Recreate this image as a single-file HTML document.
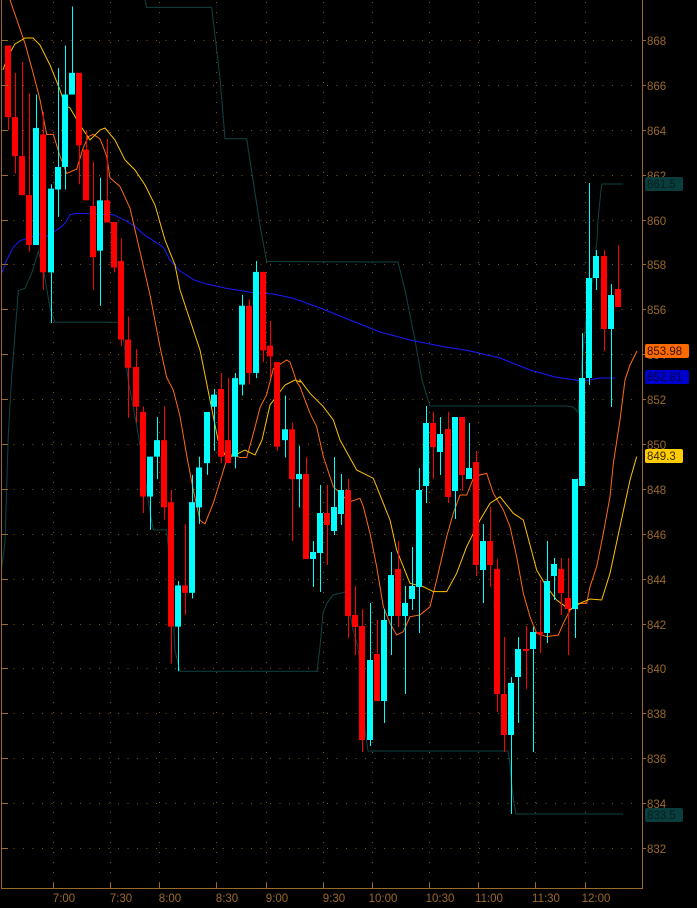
<!DOCTYPE html>
<html><head><meta charset="utf-8"><style>
html,body{margin:0;padding:0;background:#000;width:697px;height:908px;overflow:hidden}
svg{display:block}
text{font-family:"Liberation Sans",sans-serif;font-size:11.5px}
</style></head><body>
<svg id="c" width="697" height="908" xmlns="http://www.w3.org/2000/svg">
<rect width="697" height="908" fill="#000"/>
<g id="grid"></g>
<g id="lines"></g>
<g id="candles"></g>
<g id="axis"></g>
</svg>
<script>
var NS="http://www.w3.org/2000/svg";
function el(p,t,a,txt){var e=document.createElementNS(NS,t);for(var k in a)e.setAttribute(k,a[k]);if(txt!=null)e.textContent=txt;document.getElementById(p).appendChild(e);return e;}
function Y(p){return 40+(868-p)*22.444;}
var AX="#9a6a2a";
for(var p=832;p<=868;p+=2){var y=Math.round(Y(p))+0.5;
 el("grid","line",{x1:4,y1:y,x2:640,y2:y,stroke:"#7a5520","stroke-width":1,"stroke-dasharray":"1 8.5"});
 el("axis","line",{x1:642,y1:y,x2:646,y2:y,stroke:AX});
 el("axis","line",{x1:1,y1:y,x2:8,y2:y,stroke:AX});
 el("axis","text",{x:647,y:y+4.5,fill:AX},String(p));}
var vx=[53,110,159,216,266,323,372,429,478,535,585],tl=["7:00","7:30","8:00","8:30","9:00","9:30","10:00","10:30","11:00","11:30","12:00"];
vx.forEach(function(x,i){var xx=x+0.5;
 el("grid","line",{x1:xx,y1:2,x2:xx,y2:884,stroke:"#7a5520","stroke-dasharray":"1 9"});
 el("axis","line",{x1:xx,y1:883,x2:xx,y2:888,stroke:AX});
 el("axis","text",{x:x+11,y:902,fill:AX,"text-anchor":"middle"},tl[i]);});
el("axis","line",{x1:642.5,y1:0,x2:642.5,y2:888,stroke:AX});
el("axis","line",{x1:1.5,y1:0,x2:1.5,y2:888,stroke:AX});
el("axis","line",{x1:1,y1:888.5,x2:643,y2:888.5,stroke:AX});
function box(y,w,bg,fg,t){el("axis","rect",{x:645,y:y,width:w,height:14,rx:2,fill:bg});el("axis","text",{x:647,y:y+11,fill:fg},t);}
box(177,38,"#0a3d3d","#04201f","861.5");
box(344,44,"#ff6a00","#301000","853.98");
box(370,44,"#0000cc","#00004a","852.81");
box(449,38,"#ffcc00","#3a2a00","849.3");
box(808,38,"#0a3d3d","#04201f","833.5");
function pl(pts,col,w){el("lines","polyline",{points:pts.map(function(q){return q[0]+","+q[1]}).join(" "),fill:"none",stroke:col,"stroke-width":w||1});}
function z3(a){return a.map(function(q){return [q[0]/3,q[1]/2.306]});}
function z4(a){return a.map(function(q){return [300+q[0]/3,380+q[1]/3]});}
var T="#0f4444";
pl(z3([[5,1310],[15,1250],[25,1000],[35,870],[45,770],[55,670],[75,665],[95,630],[115,580],[130,620],[150,710],[165,743],[355,743],[370,780],[385,880],[410,980],[435,1100],[450,1180],[460,1222],[500,1222],[515,1350],[525,1500],[540,1548],[955,1548]]).concat([[317,671],[320,647],[323,613],[327,603],[333,595],[345,592],[347,600],[350,613],[353,630],[358,647],[362,687],[365,730],[368,751],[508,751],[510,765],[513,797],[516,814],[623,814]]),T);
pl(z3([[435,0],[440,17],[635,17],[660,180],[675,320],[740,320],[760,420],[780,520],[800,603]]).concat([[398,262],[405,290],[415,340],[422,380],[430,406],[567,406],[573,407],[578,412],[580,393],[582,360],[587,310],[593,277],[597,240],[598,220],[601,190],[602,184],[623,184]]),T);
pl(z3([[5,630],[20,600],[40,570],[60,555],[80,550],[100,545],[120,540],[140,545],[160,535],[180,525],[195,515],[210,495],[230,492],[270,493],[300,495],[340,495],[380,510],[410,525],[430,540],[460,555],[490,570],[510,600],[540,625],[580,645],[620,655],[680,665],[760,675],[820,678],[880,688],[960,710]]).concat([[350,320],[380,332],[410,340],[440,346],[470,351],[500,358],[530,370],[555,377],[582,381],[600,378],[615,378]]),"#1a1aff");
pl(z3([[30,0],[75,100],[100,170],[120,230],[140,310],[160,310],[180,360],[200,400],[230,390],[250,340],[265,315],[280,310],[300,320],[320,360],[330,410],[360,430],[390,480],[420,580],[450,680],[480,800],[500,870],[520,900],[540,960],[560,1050],[580,1130],[600,1200],[615,1208],[640,1160],[660,1110],[680,1060],[700,1050],[720,1055],[740,1055],[760,1000],[780,940],[800,910],[820,850],[860,830],[870,835],[890,880]]).concat(z4([[0,20],[30,100],[50,140],[70,230],[100,320],[130,350],[150,365],[180,355],[190,380],[210,460],[230,560],[250,680],[270,730],[290,765],[310,755],[330,710],[360,705],[390,680],[410,600],[440,470],[460,400],[480,345],[500,345],[520,295],[540,285],[560,280],[580,340],[610,390],[630,440],[650,530],[670,640],[690,710],[710,760],[740,770],[775,765],[790,730],[810,690],[830,670],[860,670],[870,620],[890,560],[910,460],[930,350],[940,250],[960,120],[975,0]])).concat([[630,365],[637,351]]),"#ff6a10");
pl([[3,70],[8,56],[15,44],[25,38],[33,38],[40,45],[50,65],[60,90],[65,105],[70,108],[80,125],[90,140],[100,130],[105,128],[115,140],[125,160],[135,170],[145,185],[155,205],[165,240],[175,265],[180,290],[190,320],[200,350],[210,400],[218,440],[225,455],[235,455],[245,450],[255,455],[262,440],[270,405],[285,385],[295,380],[300,382]].concat(z4([[0,0],[30,40],[70,80],[100,120],[120,180],[170,270],[220,295],[250,370],[270,420],[290,510],[330,610],[370,620],[400,635],[440,635],[470,580],[500,500],[540,420],[570,370],[600,350],[640,400],[670,420],[710,570],[740,620],[770,660],[810,690],[840,670],[870,657],[905,660],[930,580],[960,440],[990,300],[1010,230]])),"#ffc000");
var C=[];
var a3=[[8,105,270,105,300,0],[15,270,360,168,400,0],[22,360,450,143,450,0],[29,450,565,215,580,0],[36,295,565,218,565,1],[43,310,628,258,668,0],[51,435,628,425,745,1],[58,385,437,157,500,1],[65,218,385,105,437,1],[72,168,218,15,218,1],[79,168,335,168,425,0],[86,345,462,300,462,0],[93,475,593,373,668,0],[100,462,578,410,705,1],[107,462,513,320,513,0],[114,512,617,512,628,0],[121,602,783,550,797,0],[128,783,848,730,963,0],[136,846,938,805,975,0],[143,950,1145,937,1183,0],[150,1053,1145,1053,1222,1],[157,1015,1053,962,1105,1],[164,1015,1170,937,1198,0],[171,1158,1445,1130,1530,0],[178,1350,1445,1340,1548,1],[185,1350,1367,1208,1418,0],[192,1158,1367,1095,1380,1],[199,1078,1170,1053,1208,1],[207,950,1068,950,1095,1],[214,910,938,897,1040,1],[221,897,1053,860,1068,0],[228,1015,1068,872,1068,0],[235,872,1053,860,1080,1],[242,705,887,680,912,1],[249,705,860,690,887,0],[256,627,860,602,872,1],[263,627,808,627,835,0],[270,797,822,740,872,0],[277,835,1030,835,1040,0],[285,990,1015,912,1055,1],[292,990,1105,975,1248,0],[299,1093,1105,1028,1170,1]];
a3.forEach(function(c){C.push([c[0],c[1]/2.306,c[2]/2.306,c[3]/2.306,c[4]/2.306,c[5]]);});
var a4=[[306,474,559,457,559,0],[313,552,559,541,587,1],[320,513,553,485,592,1],[327,513,525,485,565,0],[334,507,531,457,535,1],[341,490,514,474,525,1],[348,490,616,479,638,0],[355,615,627,586,655,0],[362,626,740,609,752,0],[370,660,740,603,746,1],[377,654,701,620,701,0],[384,620,701,609,723,1],[391,575,616,552,655,1],[398,569,616,541,627,0],[405,603,616,586,694,1],[412,586,599,547,610,1],[419,490,587,468,633,1],[426,423,486,406,503,1],[433,423,447,412,479,0],[440,434,452,417,475,1],[448,429,497,412,503,0],[455,417,491,417,519,1],[462,417,475,417,491,0],[469,468,479,423,479,1],[476,462,565,451,576,0],[483,541,570,524,603,1],[490,541,565,507,587,0],[497,569,694,559,712,0],[504,694,735,637,752,0],[511,683,735,677,814,1],[518,649,677,637,723,1],[526,649,651,626,689,0],[533,632,649,627,752,1],[540,632,634,580,653,0],[547,581,633,541,643,1],[554,564,576,558,600,1],[561,569,593,558,615,0],[568,598,609,558,655,0],[575,479,609,479,638,1],[582,378,486,333,486,1],[589,278,378,183,385,1],[596,256,278,250,290,1],[604,256,329,250,351,0],[611,295,329,284,407,1],[618,289,307,245,307,0]];
a4.forEach(function(c){C.push(c);});
C.forEach(function(c){var col=c[5]?"#00ffff":"#ff0000";var x=Math.round(c[0]);
 el("candles","line",{x1:x+0.5,y1:c[3],x2:x+0.5,y2:c[4],stroke:col,"stroke-width":1});
 el("candles","rect",{x:x-3,y:c[1],width:6,height:Math.max(2,c[2]-c[1]),fill:col});});
</script>
</body></html>
